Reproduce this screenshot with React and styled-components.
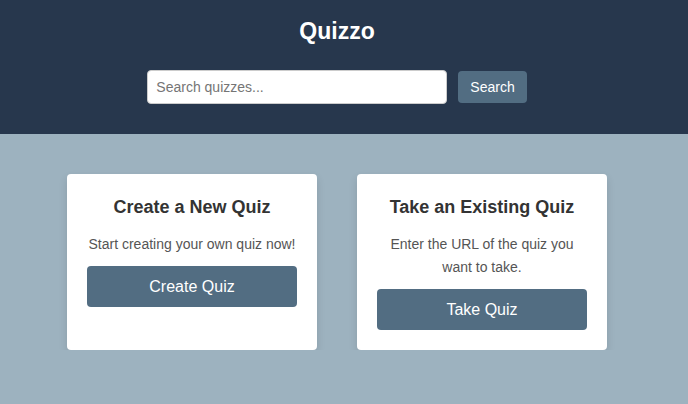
import styled, { createGlobalStyle } from "styled-components";

const GlobalStyle = createGlobalStyle`
  html, body {
    margin: 0;
    padding: 0;
    background: #9db2bf;
    font-family: "Liberation Sans", Arial, sans-serif;
  }
  * { box-sizing: border-box; }
`;

const Header = styled.header`
  background: #27374d;
  height: 134px;
  padding: 17px 14px 0 0;
  display: flex;
  flex-direction: column;
  align-items: center;
`;

const Title = styled.h1`
  margin: 0 0 25px;
  font-size: 23px;
  line-height: 28px;
  font-weight: bold;
  color: #fff;
`;

const SearchForm = styled.form`
  display: flex;
  align-items: center;
  gap: 11px;
`;

const SearchInput = styled.input`
  width: 300px;
  height: 34px;
  padding: 0 8px;
  border: 1px solid #ccc;
  border-radius: 4px;
  font-family: inherit;
  font-size: 14px;
  color: #333;
  outline: none;
  &::placeholder {
    color: #757575;
  }
`;

const SearchButton = styled.button`
  height: 32px;
  padding: 0 12px;
  background: #526d82;
  color: #fff;
  border: 0;
  border-radius: 4px;
  font-family: inherit;
  font-size: 14px;
  cursor: pointer;
`;

const Main = styled.main`
  display: flex;
  justify-content: center;
  align-items: stretch;
  gap: 40px;
  padding: 40px 14px 0 0;
`;

const Card = styled.section`
  width: 250px;
  padding: 20px;
  background: #fff;
  border-radius: 4px;
  box-shadow: 0 4px 8px rgba(0, 0, 0, 0.12);
  text-align: center;
`;

const CardTitle = styled.h2`
  margin: 0 0 12px;
  font-size: 18px;
  line-height: 27px;
  font-weight: bold;
  color: #333;
`;

const CardText = styled.p`
  margin: 0 0 10px;
  font-size: 14px;
  line-height: 23px;
  color: #555;
`;

const CardButton = styled.button`
  width: 100%;
  padding: 10px;
  background: #526d82;
  color: #fff;
  border: 0;
  border-radius: 4px;
  font-family: inherit;
  font-size: 16px;
  line-height: 21px;
  cursor: pointer;
`;

const cards = [
  {
    title: "Create a New Quiz",
    text: "Start creating your own quiz now!",
    action: "Create Quiz",
  },
  {
    title: "Take an Existing Quiz",
    text: "Enter the URL of the quiz you want to take.",
    action: "Take Quiz",
  },
];

export default function App() {
  return (
    <>
      <GlobalStyle />
      <Header>
        <Title>Quizzo</Title>
        <SearchForm onSubmit={(e) => e.preventDefault()}>
          <SearchInput type="text" placeholder="Search quizzes..." />
          <SearchButton type="submit">Search</SearchButton>
        </SearchForm>
      </Header>
      <Main>
        {cards.map((c) => (
          <Card key={c.title}>
            <CardTitle>{c.title}</CardTitle>
            <CardText>{c.text}</CardText>
            <CardButton>{c.action}</CardButton>
          </Card>
        ))}
      </Main>
    </>
  );
}
